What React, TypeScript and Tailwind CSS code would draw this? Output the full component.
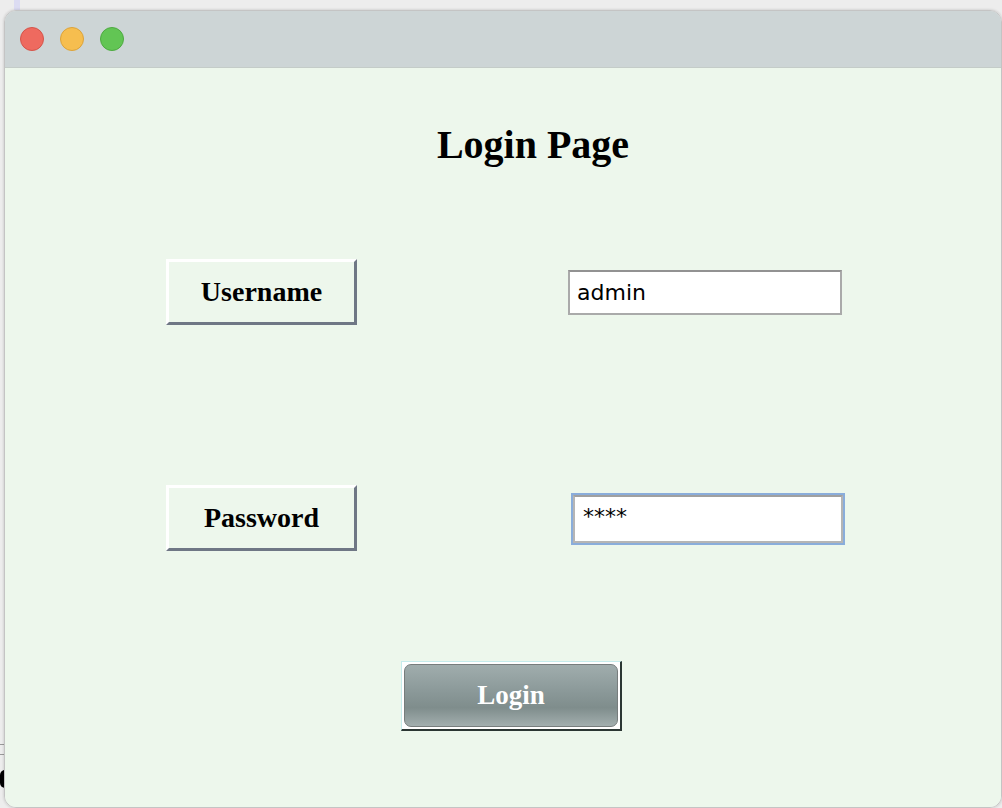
export default function App() {
  const serif = { fontFamily: '"Liberation Serif", "Times New Roman", serif' };
  return (
    <div className="relative w-[1002px] h-[808px] overflow-hidden bg-[#ededed]">
      <div className="absolute left-[14px] top-0 w-[6px] h-[10px] bg-[#dcdcf2]" />
      <div className="absolute left-0 top-[744px] w-[4px] h-[1px] bg-[#9a9a9a]" />
      <div className="absolute left-0 top-[754px] w-[4px] h-[1px] bg-[#9a9a9a]" />
      <div className="absolute left-0 top-[770px] w-[5px] h-[18px] rounded-l-full bg-black" />
      <div className="absolute left-[4px] top-[10px] w-[998px] h-[798px] rounded-[12px] overflow-hidden border border-[#c4c4c4] shadow-[0_0_3px_rgba(0,0,0,0.2)] flex flex-col">
        <div className="h-[57px] shrink-0 bg-[#cdd5d6] flex items-center gap-[16px] pl-[15px] border-b border-[#c4ccc8]">
          <div className="w-[24px] h-[24px] rounded-full bg-[#ee6a5f] border border-[#d5544a]" />
          <div className="w-[24px] h-[24px] rounded-full bg-[#f6be4f] border border-[#dca33a]" />
          <div className="w-[24px] h-[24px] rounded-full bg-[#62c554] border border-[#4eaa41]" />
        </div>
        <div className="flex-1 bg-[#edf7ec] flex flex-col pt-[53px]">
          <div
            className="h-[48px] leading-[48px] text-center text-[40px] font-bold text-black pl-[60px]"
            style={serif}
          >
            Login Page
          </div>
          <div className="mt-[90px] h-[66px] flex items-center">
            <div
              className="ml-[161px] w-[191px] h-[66px] flex items-center justify-center border-[3px] border-t-white border-l-white border-r-[#6f7785] border-b-[#6f7785] text-[28px] font-bold text-black"
              style={serif}
            >
              Username
            </div>
            <div className="ml-[211px] w-[274px] h-[45px] bg-white border-2 border-[#aaaaaa] border-t-[#929292] flex items-center pl-[7px]">
              <span className="text-[22px] text-black" style={{ fontFamily: '"DejaVu Sans", sans-serif' }}>
                admin
              </span>
            </div>
          </div>
          <div className="mt-[160px] h-[66px] flex items-center">
            <div
              className="ml-[161px] w-[191px] h-[66px] flex items-center justify-center border-[3px] border-t-white border-l-white border-r-[#6f7785] border-b-[#6f7785] text-[28px] font-bold text-black"
              style={serif}
            >
              Password
            </div>
            <div className="ml-[214px] mt-[2px] w-[274px] h-[52px] border-2 border-[#8aaddb]">
              <div className="w-full h-full bg-white border-2 border-[#b5b5b5] border-t-[#a0a0a0] flex items-start pl-[8px] pt-[8px]">
                <span className="text-[22px] leading-[24px] text-black" style={{ fontFamily: '"DejaVu Sans", sans-serif' }}>
                  ****
                </span>
              </div>
            </div>
          </div>
          <div className="mt-[110px] ml-[396px] w-[221px] h-[70px] border-t border-l border-t-[#c6ecec] border-l-[#c6ecec] border-r-2 border-b-2 border-r-[#2b3633] border-b-[#2b3633] bg-white p-[2px]">
            <div
              className="w-full h-full rounded-[7px] border border-[#777d7d] bg-[linear-gradient(to_bottom,#a0adad_0%,#8a9898_45%,#7f8d8c_70%,#a2aeae_100%)] flex items-center justify-center text-white text-[27px] font-bold"
              style={serif}
            >
              Login
            </div>
          </div>
        </div>
      </div>
    </div>
  );
}
